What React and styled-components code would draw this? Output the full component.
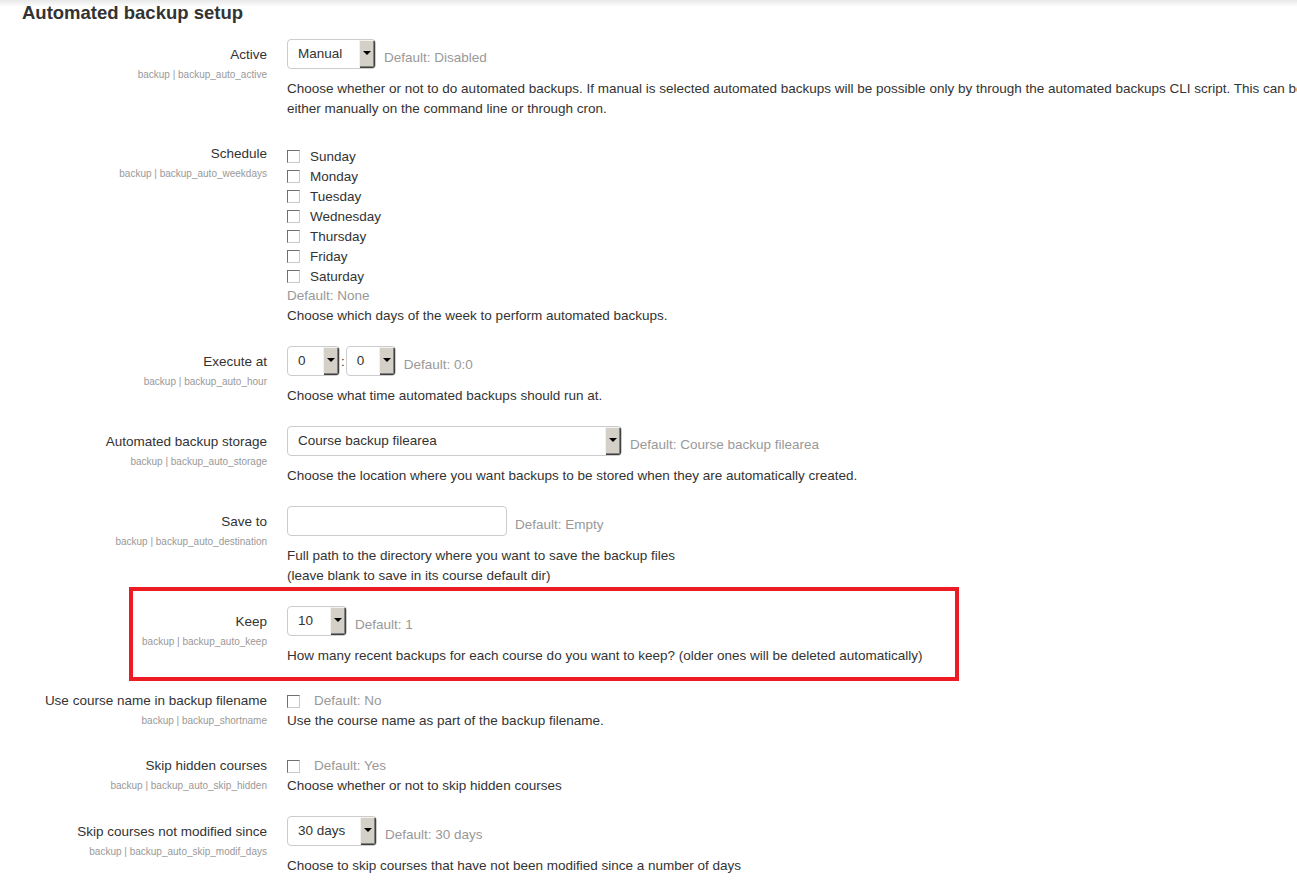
import React from 'react';
import styled, { createGlobalStyle } from 'styled-components';

const GlobalStyle = createGlobalStyle`
  html,
  body {
    margin: 0;
    padding: 0;
    overflow-x: hidden;
    background: #fff;
  }

  body {
    font-family: 'Liberation Sans', Arial, sans-serif;
    color: #333;
  }
`;

const Page = styled.div`
  min-height: 892px;
  background: linear-gradient(to bottom, #e8e8e8 0, #fff 7px);
`;

const Heading = styled.h2`
  margin: 0;
  padding-left: 22px;
  font-size: 18.5px;
  line-height: 26px;
  font-weight: bold;
  color: #333;
`;

const Form = styled.div`
  margin-top: 13px;
  display: flex;
  flex-direction: column;
  gap: 20px;
`;

const Row = styled.div`
  position: relative;
  display: grid;
  grid-template-columns: 267px minmax(0, 1fr);
  column-gap: 20px;
  padding-top: ${(p) => (p.$text ? '5px' : '0')};

  ${(p) =>
    p.$highlight &&
    `
    &::after {
      content: '';
      position: absolute;
      left: 129px;
      top: -19px;
      width: 830px;
      height: 94px;
      border: 4px solid #ed1c24;
      box-sizing: border-box;
      pointer-events: none;
    }
  `}
`;

const LabelCol = styled.div`
  text-align: right;
  padding-top: ${(p) => (p.$text ? '0' : '6px')};
`;

const Label = styled.div`
  font-size: 13.5px;
  line-height: 20px;
  color: #333;
`;

const SubLabel = styled.div`
  margin-top: 3px;
  font-size: 10px;
  line-height: 14px;
  color: #999;
`;

const ControlCol = styled.div`
  display: flex;
  flex-direction: column;
  align-items: flex-start;
`;

const ControlLine = styled.div`
  display: flex;
  align-items: flex-start;
  gap: 8px;
`;

const DefaultText = styled.span`
  font-size: 13.5px;
  line-height: 20px;
  color: #999;
  padding-top: ${(p) => (p.$text ? '0' : '9px')};
  margin-left: ${(p) => (p.$indent ? '4px' : '0')};
  white-space: nowrap;
`;

const Desc = styled.div`
  margin-top: ${(p) => (p.$tight ? '0' : '10px')};
  font-size: 13.5px;
  line-height: 20px;
  color: #333;
  white-space: ${(p) => (p.$nowrap ? 'nowrap' : 'normal')};
`;

const SelectBox = styled.div`
  display: flex;
  width: ${(p) => p.$w}px;
  height: 30px;
  box-sizing: border-box;
  border: 1px solid #ccc;
  border-radius: 4px;
  background: #fff;
  overflow: hidden;
`;

const SelectValue = styled.span`
  flex: 1;
  padding-left: 10px;
  font-size: 13.5px;
  line-height: 28px;
  color: #333;
  white-space: nowrap;
`;

const SelectArrow = styled.span`
  width: 16px;
  display: flex;
  align-items: center;
  justify-content: center;
  background: #d4d0c8;
  box-shadow: inset 1px 1px #f4f2ee, inset -1px -1px #404040, inset -2px -2px #808080;

  &::before {
    content: '';
    margin-top: -2px;
    border-left: 4px solid transparent;
    border-right: 4px solid transparent;
    border-top: 4px solid #000;
  }
`;

const TimePair = styled.div`
  display: flex;
  align-items: center;
  gap: 1px;
`;

const Colon = styled.span`
  font-size: 13.5px;
  line-height: 20px;
  padding-top: 2px;
`;

const TextInput = styled.div`
  width: 220px;
  height: 30px;
  box-sizing: border-box;
  border: 1px solid #ccc;
  border-radius: 4px;
  background: #fff;
`;

const DayList = styled.div`
  margin-top: 2px;
  display: flex;
  flex-direction: column;
`;

const CheckLine = styled.label`
  display: flex;
  align-items: center;
  gap: 10px;
  height: 20px;
  font-size: 13.5px;
  color: #333;
`;

const Box = styled.span`
  width: 13px;
  height: 13px;
  box-sizing: border-box;
  border: 1px solid;
  border-color: #6f6f6f #c9c9c9 #c9c9c9 #6f6f6f;
  background: #fff;
  flex-shrink: 0;
`;

const Select = ({ value, width }) => (
  <SelectBox $w={width}>
    <SelectValue>{value}</SelectValue>
    <SelectArrow />
  </SelectBox>
);

const Labels = ({ title, name, text }) => (
  <LabelCol $text={text}>
    <Label>{title}</Label>
    <SubLabel>backup | {name}</SubLabel>
  </LabelCol>
);

const days = ['Sunday', 'Monday', 'Tuesday', 'Wednesday', 'Thursday', 'Friday', 'Saturday'];

const App = () => (
  <Page>
    <GlobalStyle />
    <Heading>Automated backup setup</Heading>
    <Form>
      <Row>
        <Labels title="Active" name="backup_auto_active" />
        <ControlCol>
          <ControlLine>
            <Select value="Manual" width={89} />
            <DefaultText>Default: Disabled</DefaultText>
          </ControlLine>
          <Desc $nowrap>
            Choose whether or not to do automated backups. If manual is selected automated
            backups will be possible only by through the automated backups CLI script. This can
            be done
            <br />
            either manually on the command line or through cron.
          </Desc>
        </ControlCol>
      </Row>

      <Row $text>
        <Labels title="Schedule" name="backup_auto_weekdays" text />
        <ControlCol>
          <DayList>
            {days.map((d) => (
              <CheckLine key={d}>
                <Box />
                {d}
              </CheckLine>
            ))}
          </DayList>
          <DefaultText $text>Default: None</DefaultText>
          <Desc $tight>Choose which days of the week to perform automated backups.</Desc>
        </ControlCol>
      </Row>

      <Row>
        <Labels title="Execute at" name="backup_auto_hour" />
        <ControlCol>
          <ControlLine>
            <TimePair>
              <Select value="0" width={53} />
              <Colon>:</Colon>
              <Select value="0" width={50} />
            </TimePair>
            <DefaultText>Default: 0:0</DefaultText>
          </ControlLine>
          <Desc>Choose what time automated backups should run at.</Desc>
        </ControlCol>
      </Row>

      <Row>
        <Labels title="Automated backup storage" name="backup_auto_storage" />
        <ControlCol>
          <ControlLine>
            <Select value="Course backup filearea" width={335} />
            <DefaultText>Default: Course backup filearea</DefaultText>
          </ControlLine>
          <Desc>
            Choose the location where you want backups to be stored when they are automatically
            created.
          </Desc>
        </ControlCol>
      </Row>

      <Row>
        <Labels title="Save to" name="backup_auto_destination" />
        <ControlCol>
          <ControlLine>
            <TextInput />
            <DefaultText>Default: Empty</DefaultText>
          </ControlLine>
          <Desc>
            Full path to the directory where you want to save the backup files
            <br />
            (leave blank to save in its course default dir)
          </Desc>
        </ControlCol>
      </Row>

      <Row $highlight>
        <Labels title="Keep" name="backup_auto_keep" />
        <ControlCol>
          <ControlLine>
            <Select value="10" width={60} />
            <DefaultText>Default: 1</DefaultText>
          </ControlLine>
          <Desc>
            How many recent backups for each course do you want to keep? (older ones will be
            deleted automatically)
          </Desc>
        </ControlCol>
      </Row>

      <Row $text>
        <Labels title="Use course name in backup filename" name="backup_shortname" text />
        <ControlCol>
          <CheckLine>
            <Box />
            <DefaultText $text $indent>
              Default: No
            </DefaultText>
          </CheckLine>
          <Desc $tight>Use the course name as part of the backup filename.</Desc>
        </ControlCol>
      </Row>

      <Row $text>
        <Labels title="Skip hidden courses" name="backup_auto_skip_hidden" text />
        <ControlCol>
          <CheckLine>
            <Box />
            <DefaultText $text $indent>
              Default: Yes
            </DefaultText>
          </CheckLine>
          <Desc $tight>Choose whether or not to skip hidden courses</Desc>
        </ControlCol>
      </Row>

      <Row>
        <Labels title="Skip courses not modified since" name="backup_auto_skip_modif_days" />
        <ControlCol>
          <ControlLine>
            <Select value="30 days" width={90} />
            <DefaultText>Default: 30 days</DefaultText>
          </ControlLine>
          <Desc>Choose to skip courses that have not been modified since a number of days</Desc>
        </ControlCol>
      </Row>
    </Form>
  </Page>
);

export default App;
